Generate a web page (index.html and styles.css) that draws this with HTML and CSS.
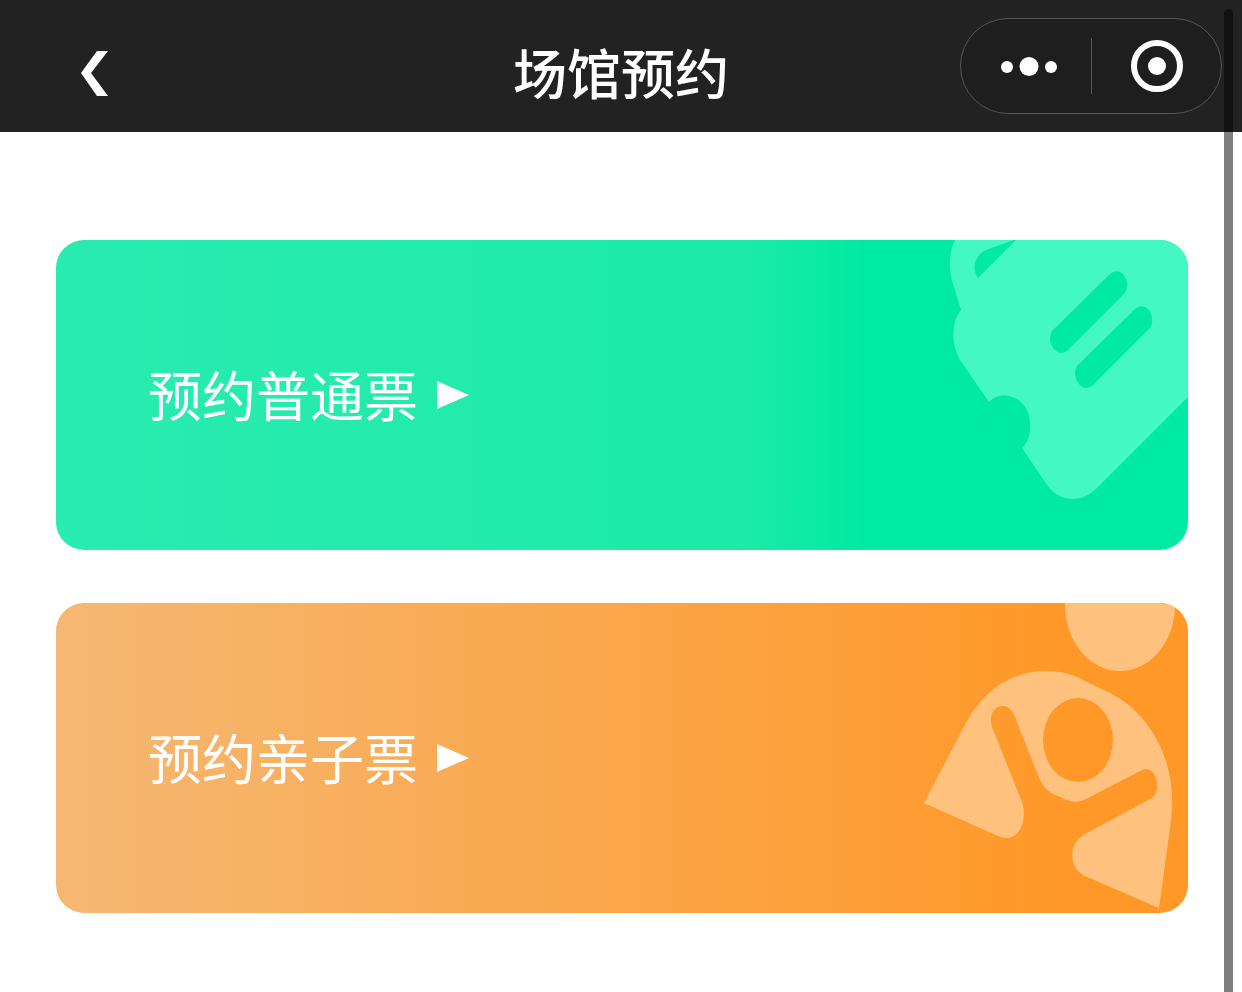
FILE: index.html
```
<!DOCTYPE html>
<html lang="zh-CN">
<head>
  <meta charset="UTF-8">
  <meta name="viewport" content="width=device-width, initial-scale=1.0">
  <title>场馆预约</title>
  <link rel="stylesheet" href="styles.css">
</head>
<body>
  <header class="navbar">
    <button class="back" type="button" aria-label="返回">
      <svg width="28" height="46" viewBox="0 0 28 46"><path d="M17 0H28L11 22L28 45H17L1 22Z" fill="#fff"/></svg>
    </button>
    <h1>场馆预约</h1>
    <div class="capsule">
      <button class="more" type="button" aria-label="更多">
        <svg width="56" height="20" viewBox="0 0 56 20" fill="#fff">
          <circle cx="6" cy="11" r="6"/>
          <circle cx="28" cy="10.5" r="9.5"/>
          <circle cx="50" cy="11" r="6"/>
        </svg>
      </button>
      <button class="close" type="button" aria-label="关闭">
        <svg width="52" height="52" viewBox="0 0 52 52">
          <circle cx="26" cy="26" r="23" fill="none" stroke="#fff" stroke-width="6"/>
          <circle cx="26" cy="26" r="9" fill="#fff"/>
        </svg>
      </button>
    </div>
  </header>

  <main class="tickets">
    <a class="ticket ticket-normal" href="#normal">
      <span class="label">预约普通票</span>
      <svg class="arrow" width="32" height="28" viewBox="0 0 32 28"><path d="M0 0L32 14L0 28Z" fill="#fff"/></svg>
      <svg class="art" width="300" height="310" viewBox="0 0 300 310">
        <path fill="#43f9c1" fill-rule="evenodd" d="M67 0C61 12 60 28 65 44L73 70C64 80 62 103 72 120L101 162C107 156 114 154 121 156C134 159 142 170 142 184C143 194 140 202 134 208L157 242C170 263 193 264 209 248L300 157V0Z
          M126 0L98 10C87 15 83 28 90 38L128 0Z"/>
        <path id="bar" fill="#00eaa1" d="M164 91L222 34Q229 28 236 35Q242 45 237 53L181 109Q173 117 166 109Q159 100 164 91Z"/>
        <use href="#bar" x="25" y="35"/>
      </svg>
    </a>
    <a class="ticket ticket-family" href="#family">
      <span class="label">预约亲子票</span>
      <svg class="arrow" width="32" height="28" viewBox="0 0 32 28"><path d="M0 0L32 14L0 28Z" fill="#fff"/></svg>
      <svg class="art" width="300" height="310" viewBox="0 0 300 310" fill="#fec27e">
        <ellipse cx="232" cy="2" rx="55" ry="66"/>
        <path fill-rule="evenodd" d="M36 200L77 122C97 84 127 68 159 68C170 68 180 70 189 74L222 90C260 109 284 152 284 197C284 207 283 216 282 225L271 305L197 273C180 265 179 239 199 230L262 196C268 193 270 187 269 180C268 170 262 164 254 167L200 195C193 199 186 200 179 197L165 191C158 187 154 182 150 172L127 114C123 104 118 103 114 103C107 103 100 112 104 124L134 199C140 217 131 235 119 235C116 235 113 234 110 233Z
          M190 95A35 42 0 1 0 190 179A35 42 0 1 0 190 95Z"/>
      </svg>
    </a>
  </main>

  <div class="scrollbar"></div>
</body>
</html>
```
FILE: styles.css
```
* { box-sizing: border-box; }
body { margin: 0; min-height: 100vh; background: #fff; font-family: "Noto Sans CJK SC", sans-serif; }
button { padding: 0; border: none; background: none; cursor: pointer; }
svg { display: block; }

.navbar { display: grid; grid-template-columns: 1fr auto 1fr; align-items: center; height: 132px; padding: 0 20px 0 80px; background: #222; color: #fff; }
.navbar h1 { margin: 0; padding: 12px 60px 0 0; font-size: 54px; line-height: 80px; font-weight: 500; }
.back { justify-self: start; padding-top: 16px; }

.capsule { justify-self: end; display: flex; align-items: center; width: 262px; height: 96px; border: 1px solid #555; border-radius: 48px; background: #1e1e1e; }
.capsule button { display: flex; align-items: center; justify-content: center; width: 50%; height: 56px; }
.capsule .more { padding-left: 6px; }
.capsule .close { border-left: 1px solid #555; }

.tickets { display: flex; flex-direction: column; gap: 53px; padding: 108px 54px 79px 56px; }
.ticket { display: flex; align-items: center; height: 310px; padding-left: 92px; border-radius: 28px; overflow: hidden; color: #fff; text-decoration: none; }
.ticket-normal { background: linear-gradient(90deg, #2aebb0, #1deba7 60%, #00eaa1 72%); }
.ticket-family { background: linear-gradient(90deg, #f5b873, #fba649 50%, #ff9827 90%); }
.label { padding-bottom: 2px; font-size: 54px; line-height: 80px; font-weight: 400; }
.arrow { margin-left: 19px; }
.art { margin-left: auto; }

.scrollbar { position: fixed; top: 9px; right: 9px; bottom: 0; width: 9px; border-radius: 5px 5px 0 0; background: rgba(0, 0, 0, 0.5); }
```
